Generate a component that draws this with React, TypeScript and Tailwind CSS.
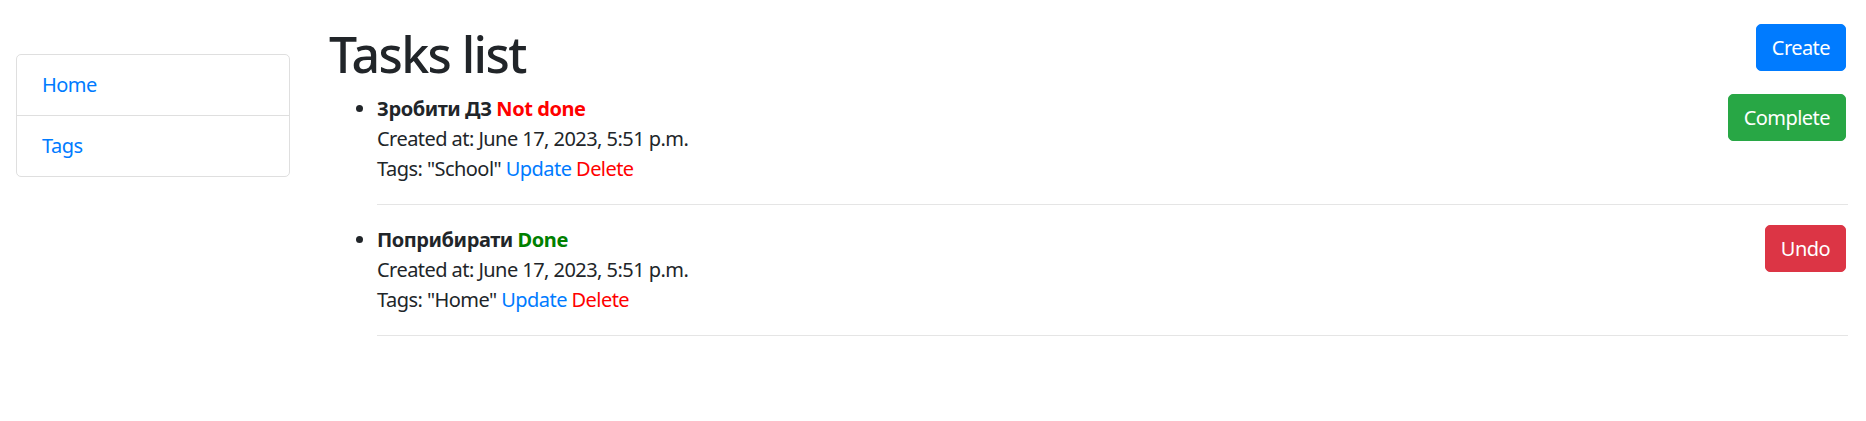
import React from "react";

const tasks = [
  { title: "Зробити ДЗ", done: false, tag: "School" },
  { title: "Поприбирати", done: true, tag: "Home" },
];

export default function App() {
  return (
    <div
      className="flex min-h-[421px] w-full bg-white text-[#212529] text-[20px] leading-[30px] tracking-[-0.55px]"
      style={{ fontFamily: '"Noto Sans", "Open Sans", sans-serif' }}
    >
      <aside className="ml-[16px] mt-[54px] w-[274px] shrink-0">
        <div className="rounded-[5px] border border-[#dfdfdf] flex flex-col">
          <a className="px-[25px] py-[15px] text-[#007bff] border-b border-[#dfdfdf]" href="#">
            Home
          </a>
          <a className="px-[25px] py-[15px] text-[#007bff]" href="#">
            Tags
          </a>
        </div>
      </aside>
      <main className="ml-[39px] mr-[18px] flex-1 pt-[24px]">
        <div className="flex items-start justify-between">
          <h1 className="text-[50px] leading-[60px] font-medium tracking-[-1.6px]">Tasks list</h1>
          <button className="mr-[2px] rounded-[5px] bg-[#007bff] px-[15px] py-[7.5px] text-white leading-[30px] border border-[#007bff]">
            Create
          </button>
        </div>
        <ul className="mt-[10px] ml-[48px] list-disc">
          {tasks.map((t) => (
            <li key={t.title}>
              <div className="flex items-start justify-between">
                <div>
                  <div className="font-bold tracking-[-0.45px]">
                    {t.title}{" "}
                    {t.done ? (
                      <span className="text-[#008000]">Done</span>
                    ) : (
                      <span className="text-[#ff0000]">Not done</span>
                    )}
                  </div>
                  <div>Created at: June 17, 2023, 5:51 p.m.</div>
                  <div>
                    Tags: "{t.tag}" <a className="text-[#007bff]" href="#">Update</a>{" "}
                    <a className="text-[#ff0000]" href="#">Delete</a>
                  </div>
                </div>
                {t.done ? (
                  <button className="mr-[2px] rounded-[5px] bg-[#dc3545] border border-[#dc3545] px-[15px] py-[7.5px] text-white leading-[30px]">
                    Undo
                  </button>
                ) : (
                  <button className="mr-[2px] rounded-[5px] bg-[#28a745] border border-[#28a745] px-[15px] py-[7.5px] text-white leading-[30px]">
                    Complete
                  </button>
                )}
              </div>
              <hr className="my-[20px] border-t border-[#e5e5e5]" />
            </li>
          ))}
        </ul>
      </main>
    </div>
  );
}
